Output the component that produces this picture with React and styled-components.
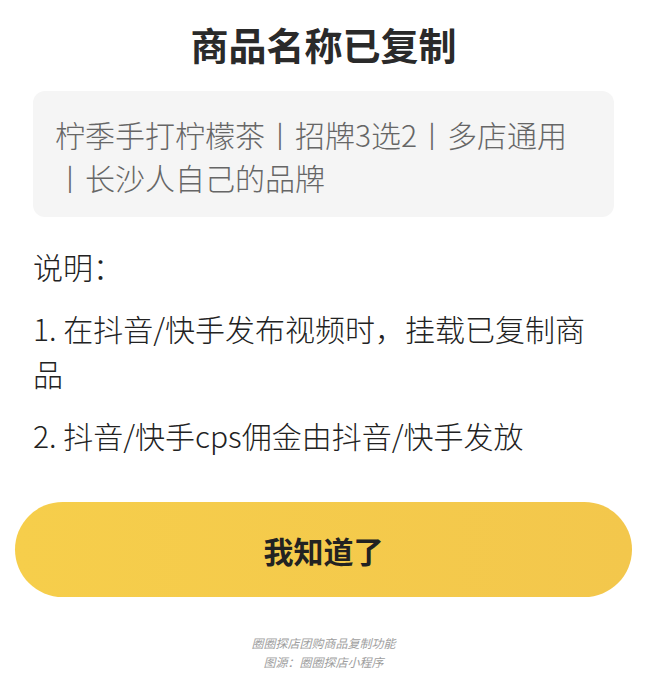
import styled, { createGlobalStyle } from "styled-components";

const GlobalStyle = createGlobalStyle`
  body {
    margin: 0;
    background: #fff;
    font-family: "Noto Sans CJK SC", "Noto Sans", sans-serif;
  }
`;

const Page = styled.div`
  width: 656px;
  box-sizing: border-box;
  padding: 18px 42px 0 33px;
  display: flex;
  flex-direction: column;
`;

const Title = styled.h1`
  margin: 0;
  font-size: 38px;
  line-height: 52px;
  font-weight: 700;
  color: #2a2a2a;
  text-align: center;
`;

const NameBox = styled.div`
  margin-top: 21px;
  padding: 22px 22px 18px;
  background: #f5f5f5;
  border-radius: 12px;
  font-size: 30px;
  font-weight: 300;
  line-height: 43px;
  color: #666;
`;

const Notes = styled.div`
  margin-top: 27px;
  display: flex;
  flex-direction: column;
  gap: 17px;
`;

const Note = styled.p`
  margin: 0;
  font-size: 30px;
  font-weight: 300;
  line-height: 45px;
  color: #222;
`;

const Button = styled.button`
  margin: 44px -18px 0;
  height: 95px;
  border: none;
  border-radius: 48px;
  background: linear-gradient(90deg, #f6ce4b, #f3c74c);
  font-family: inherit;
  font-size: 30px;
  font-weight: 700;
  color: #222;
  cursor: pointer;
`;

const Caption = styled.div`
  margin-top: 36px;
  text-align: center;
  font-size: 12px;
  line-height: 19px;
  font-style: italic;
  color: #9e9e9e;
`;

const notes = [
  "说明：",
  "1. 在抖音/快手发布视频时，挂载已复制商品",
  "2. 抖音/快手cps佣金由抖音/快手发放",
];

export default function App() {
  return (
    <Page>
      <GlobalStyle />
      <Title>商品名称已复制</Title>
      <NameBox>柠季手打柠檬茶丨招牌3选2丨多店通用丨长沙人自己的品牌</NameBox>
      <Notes>
        {notes.map((n) => (
          <Note key={n}>{n}</Note>
        ))}
      </Notes>
      <Button>我知道了</Button>
      <Caption>
        圈圈探店团购商品复制功能
        <br />
        图源：圈圈探店小程序
      </Caption>
    </Page>
  );
}
